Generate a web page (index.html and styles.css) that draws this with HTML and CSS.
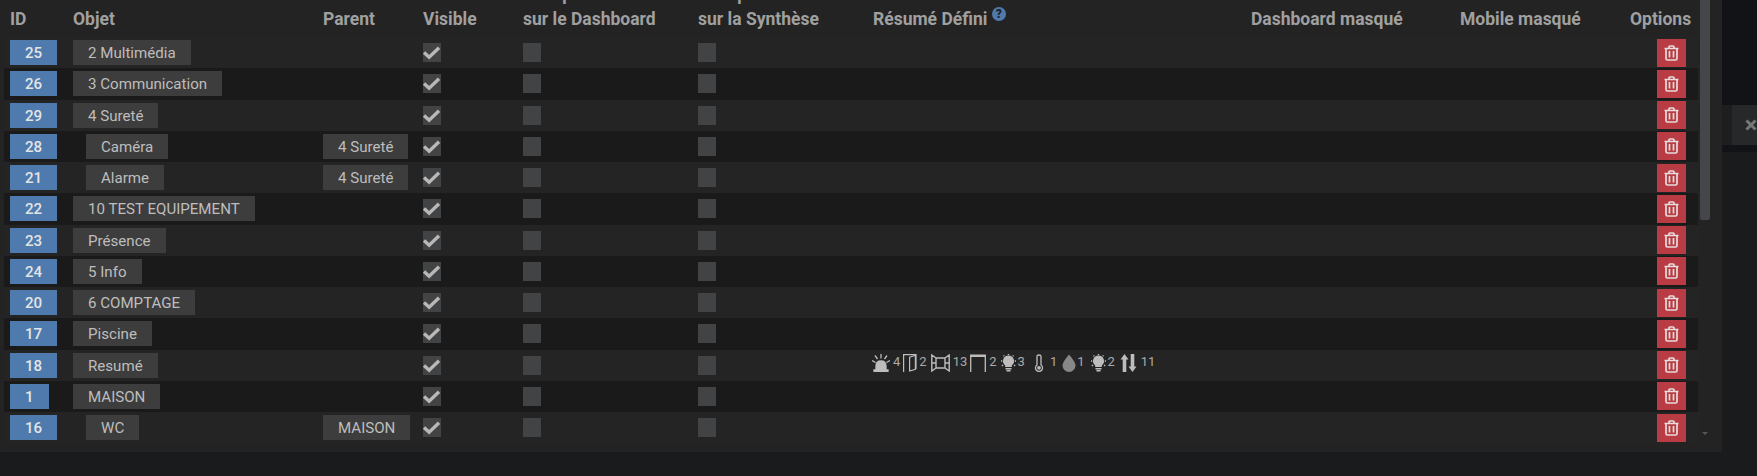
FILE: index.html
```html
<!DOCTYPE html>
<html lang="fr">
<head>
<meta charset="utf-8">
<title>Objets</title>
<link rel="stylesheet" href="styles.css">
</head>
<body>
<svg class="defs" aria-hidden="true">
  <symbol id="i-trash" viewBox="0 0 15 16"><path d="M0.500 3.500H14.500M2 3.500V13.500Q2 15 3.500 15H11.500Q13 15 13 13.500V3.500M5 3.500V2Q5 1 6 1H9Q10 1 10 2V3.500M5.500 6V12.500M9.500 6V12.500" fill="none" stroke="currentColor" stroke-width="1.700"/></symbol>
  <symbol id="i-check" viewBox="0 0 20 16"><path d="M2 8L7.500 13L18 3" fill="none" stroke="currentColor" stroke-width="3.600"/></symbol>
  <symbol id="i-bulb" viewBox="0 0 15 18"><path d="M7.500 1.500A5.500 5.500 0 0 1 10.800 11.400V13H4.200V11.400A5.500 5.500 0 0 1 7.500 1.500Z" fill="currentColor"/><path d="M4.500 14.800H10.500M5.500 16.800H9.500M7.500 0V1M2.500 1.500L3.300 2.300M12.500 1.500L11.700 2.300M0 7H1.200M13.800 7H15M0.800 11.800L2 11M14.200 11.800L13 11" fill="none" stroke="currentColor" stroke-width="1.400"/></symbol>
</svg>
<main class="page">
  <section class="panel">
    <div class="row head">
      <div>ID</div><div>Objet</div><div>Parent</div><div>Visible</div>
      <div>Masquer<br>sur le Dashboard</div><div>Masquer<br>sur la Synthèse</div>
      <div>Résumé Défini <span class="help">?</span></div>
      <div>Dashboard masqué</div><div>Mobile masqué</div><div>Options</div>
    </div>

    <div class="row"><div><span class="id">25</span></div><div><span class="badge">2 Multimédia</span></div><div></div><div><span class="cb"><svg><use href="#i-check"/></svg></span></div><div><span class="cb"></span></div><div><span class="cb"></span></div><div></div><div></div><div></div><div class="opt"><span class="del"><svg><use href="#i-trash"/></svg></span></div></div>
    <div class="row alt"><div><span class="id">26</span></div><div><span class="badge">3 Communication</span></div><div></div><div><span class="cb"><svg><use href="#i-check"/></svg></span></div><div><span class="cb"></span></div><div><span class="cb"></span></div><div></div><div></div><div></div><div class="opt"><span class="del"><svg><use href="#i-trash"/></svg></span></div></div>
    <div class="row"><div><span class="id">29</span></div><div><span class="badge">4 Sureté</span></div><div></div><div><span class="cb"><svg><use href="#i-check"/></svg></span></div><div><span class="cb"></span></div><div><span class="cb"></span></div><div></div><div></div><div></div><div class="opt"><span class="del"><svg><use href="#i-trash"/></svg></span></div></div>
    <div class="row alt"><div><span class="id">28</span></div><div><span class="badge child">Caméra</span></div><div><span class="badge">4 Sureté</span></div><div><span class="cb"><svg><use href="#i-check"/></svg></span></div><div><span class="cb"></span></div><div><span class="cb"></span></div><div></div><div></div><div></div><div class="opt"><span class="del"><svg><use href="#i-trash"/></svg></span></div></div>
    <div class="row"><div><span class="id">21</span></div><div><span class="badge child">Alarme</span></div><div><span class="badge">4 Sureté</span></div><div><span class="cb"><svg><use href="#i-check"/></svg></span></div><div><span class="cb"></span></div><div><span class="cb"></span></div><div></div><div></div><div></div><div class="opt"><span class="del"><svg><use href="#i-trash"/></svg></span></div></div>
    <div class="row alt"><div><span class="id">22</span></div><div><span class="badge">10 TEST EQUIPEMENT</span></div><div></div><div><span class="cb"><svg><use href="#i-check"/></svg></span></div><div><span class="cb"></span></div><div><span class="cb"></span></div><div></div><div></div><div></div><div class="opt"><span class="del"><svg><use href="#i-trash"/></svg></span></div></div>
    <div class="row"><div><span class="id">23</span></div><div><span class="badge">Présence</span></div><div></div><div><span class="cb"><svg><use href="#i-check"/></svg></span></div><div><span class="cb"></span></div><div><span class="cb"></span></div><div></div><div></div><div></div><div class="opt"><span class="del"><svg><use href="#i-trash"/></svg></span></div></div>
    <div class="row alt"><div><span class="id">24</span></div><div><span class="badge">5 Info</span></div><div></div><div><span class="cb"><svg><use href="#i-check"/></svg></span></div><div><span class="cb"></span></div><div><span class="cb"></span></div><div></div><div></div><div></div><div class="opt"><span class="del"><svg><use href="#i-trash"/></svg></span></div></div>
    <div class="row"><div><span class="id">20</span></div><div><span class="badge">6 COMPTAGE</span></div><div></div><div><span class="cb"><svg><use href="#i-check"/></svg></span></div><div><span class="cb"></span></div><div><span class="cb"></span></div><div></div><div></div><div></div><div class="opt"><span class="del"><svg><use href="#i-trash"/></svg></span></div></div>
    <div class="row alt"><div><span class="id">17</span></div><div><span class="badge">Piscine</span></div><div></div><div><span class="cb"><svg><use href="#i-check"/></svg></span></div><div><span class="cb"></span></div><div><span class="cb"></span></div><div></div><div></div><div></div><div class="opt"><span class="del"><svg><use href="#i-trash"/></svg></span></div></div>
    <div class="row"><div><span class="id">18</span></div><div><span class="badge">Resumé</span></div><div></div><div><span class="cb"><svg><use href="#i-check"/></svg></span></div><div><span class="cb"></span></div><div><span class="cb"></span></div>
      <div class="summary">
        <svg class="w18 first" viewBox="0 0 18 18"><path d="M4 16V12Q4 7 9 7Q14 7 14 12V16ZM2 16H16V18H2ZM9 0V4.500M3 1.500L5.500 5M15 1.500L12.500 5M0 6.500L3.500 8.500M18 6.500L14.500 8.500" fill="currentColor" stroke="currentColor" stroke-width="1.300"/></svg><span class="m3">4</span>
        <svg class="w14 m3" viewBox="0 0 14 18"><path d="M0.600 18V0.600H13V15" fill="none" stroke="currentColor" stroke-width="1.200"/><path d="M6.600 3.300L12.400 1.300V15.200L6.600 17Z" fill="none" stroke="currentColor" stroke-width="1.200"/></svg><span class="m2">2</span>
        <svg class="w19 m4" viewBox="0 0 19 18"><path d="M5 4H14V14H5ZM5 4L0.800 1V17L5 14M14 4L18.200 1V17L14 14M0.800 9H5M14 9H18.200" fill="none" stroke="currentColor" stroke-width="1.400"/></svg><span class="m3">13</span>
        <svg class="w16 m3" viewBox="0 0 16 18"><path d="M0.700 18V2H15.300V18" fill="none" stroke="currentColor" stroke-width="1.300"/><path d="M0 0.500H16V3H0Z" fill="currentColor"/></svg><span class="m3">2</span>
        <svg class="w15 m4"><use href="#i-bulb"/></svg><span class="m2">3</span>
        <svg class="w18 m6" viewBox="0 0 18 18"><path d="M6 11V2.500Q6 1 8 1Q10 1 10 2.500V11A3.500 3.500 0 1 1 6 11Z" fill="none" stroke="currentColor" stroke-width="1.300"/><circle cx="8" cy="13.800" r="1.900" fill="currentColor"/></svg><span class="m1">1</span>
        <svg class="w14 m5 drop" viewBox="0 0 14 18"><path d="M7 0.500Q13.500 8 13.500 11.500A6.500 6.500 0 0 1 0.500 11.500Q0.500 8 7 0.500Z" fill="currentColor"/></svg><span class="m1">1</span>
        <svg class="w15 m6"><use href="#i-bulb"/></svg><span class="m2">2</span>
        <svg class="w17 m5" viewBox="0 0 17 18"><path d="M4.500 0L8.500 5.500H6.300V18H2.700V5.500H0.500ZM12.500 18L8.500 12.500H10.700V0H14.300V12.500H16.500Z" fill="currentColor"/></svg><span class="m4">11</span>
      </div>
      <div></div><div></div><div class="opt"><span class="del"><svg><use href="#i-trash"/></svg></span></div></div>
    <div class="row alt"><div><span class="id">1</span></div><div><span class="badge">MAISON</span></div><div></div><div><span class="cb"><svg><use href="#i-check"/></svg></span></div><div><span class="cb"></span></div><div><span class="cb"></span></div><div></div><div></div><div></div><div class="opt"><span class="del"><svg><use href="#i-trash"/></svg></span></div></div>
    <div class="row"><div><span class="id">16</span></div><div><span class="badge child">WC</span></div><div><span class="badge">MAISON</span></div><div><span class="cb"><svg><use href="#i-check"/></svg></span></div><div><span class="cb"></span></div><div><span class="cb"></span></div><div></div><div></div><div></div><div class="opt"><span class="del"><svg><use href="#i-trash"/></svg></span></div></div>

    <div class="thumb"></div>
    <div class="arrow"></div>
  </section>
  <aside class="side">
    <div class="side-top"></div>
    <div class="tab"><div class="tab-inner"><svg viewBox="0 0 12 12"><path d="M1.500 1.500L10.500 10.500M10.500 1.500L1.500 10.500" stroke="currentColor" stroke-width="3"/></svg></div></div>
    <div class="side-strip"></div>
  </aside>
</main>
</body>
</html>
```
FILE: styles.css
```css
* { box-sizing: border-box; }
html, body { margin: 0; padding: 0; }
body {
  width: 1757px;
  height: 476px;
  overflow: hidden;
  background: #1a1b1d;
  font-family: Roboto, "Liberation Sans", sans-serif;
  font-size: 14px;
  color: #bbb;
}
.defs { display: none; }
.page { display: flex; align-items: flex-start; height: 100%; }
.panel {
  position: relative;
  flex: 0 0 1722px;
  height: 452px;
  padding-left: 4px;
  overflow: hidden;
  background: #232323;
}
.row {
  display: grid;
  grid-template-columns: 63px 250px 100px 100px 175px 175px 378px 209px 170px 68px;
  align-items: center;
  width: 1694px;
  height: 31.25px;
  padding-left: 6px;
  background: #242424;
}
.row.alt { background: #1a1a1a; }
.row.head {
  grid-template-rows: 33px;
  align-items: end;
  height: 37px;
  padding-bottom: 4px;
  background: transparent;
  font-size: 17.5px;
  font-weight: 700;
  line-height: 25.6px;
  color: #a0a0a0;
}
.id, .badge {
  display: inline-block;
  height: 25px;
  padding: 0 15px;
  font-size: 15.1px;
  font-weight: 500;
  line-height: 26px;
  vertical-align: middle;
}
.row > div { display: flex; align-items: center; }
.row.head > div { display: block; white-space: nowrap; }
.id { background: #4f7aae; color: #e4e4e4; }
.badge { background: #3d3d3d; color: #bdbdbd; font-weight: 400; }
.badge.child { margin-left: 13px; }
.cb {
  position: relative;
  display: block;
  width: 18px;
  height: 19px;
  background: #424345;
  color: #b8b8b8;
}
.cb svg { position: absolute; left: -1px; top: 2px; width: 19px; height: 15px; }
.opt { justify-content: flex-end; padding-right: 12px; }
.del {
  display: flex;
  align-items: center;
  justify-content: center;
  width: 29px;
  height: 28px;
  background: #b93b43;
  color: #e8dcdc;
}
.del svg { width: 15px; height: 16px; }
.help {
  display: inline-block;
  width: 14px;
  height: 14px;
  border-radius: 50%;
  background: #4f7aae;
  color: #232323;
  font-size: 12px;
  font-weight: 900;
  line-height: 14px;
  text-align: center;
  vertical-align: 7px;
}
.row > .summary {
  padding-bottom: 4px;
  color: #aaa;
  font-size: 13px;
  line-height: 18px;
  white-space: nowrap;
}
.summary svg { flex: none; height: 18px; color: #bdbdbd; }
.summary span { margin-top: -3px; }
.summary .first { margin-left: -1px; }
.summary .drop { color: #888; }
.m1 { margin-left: 1px; }
.m2 { margin-left: 2px; }
.m3 { margin-left: 3px; }
.m4 { margin-left: 4px; }
.m5 { margin-left: 5px; }
.m6 { margin-left: 6px; }
.w14 { width: 14px; }
.w15 { width: 15px; }
.w16 { width: 16px; }
.w17 { width: 17px; }
.w18 { width: 18px; }
.w19 { width: 19px; }
.thumb {
  position: absolute;
  left: 1700px;
  top: 0;
  width: 10px;
  height: 220px;
  border-radius: 0 0 2px 2px;
  background: #454649;
}
.arrow {
  position: absolute;
  left: 1702px;
  top: 432px;
  width: 0;
  height: 0;
  border-left: 3px solid transparent;
  border-right: 3px solid transparent;
  border-top: 3px solid #555;
}
.side { flex: 1; display: flex; flex-direction: column; }
.side-top { height: 105px; background: #121316; }
.tab { height: 40px; padding-left: 10px; background: #1d1e20; }
.tab-inner {
  display: flex;
  align-items: center;
  height: 100%;
  padding-left: 13px;
  background: #27282a;
  color: #777;
}
.tab-inner svg { flex: none; width: 12px; height: 12px; }
.side-strip { height: 7px; background: #121316; }
```
